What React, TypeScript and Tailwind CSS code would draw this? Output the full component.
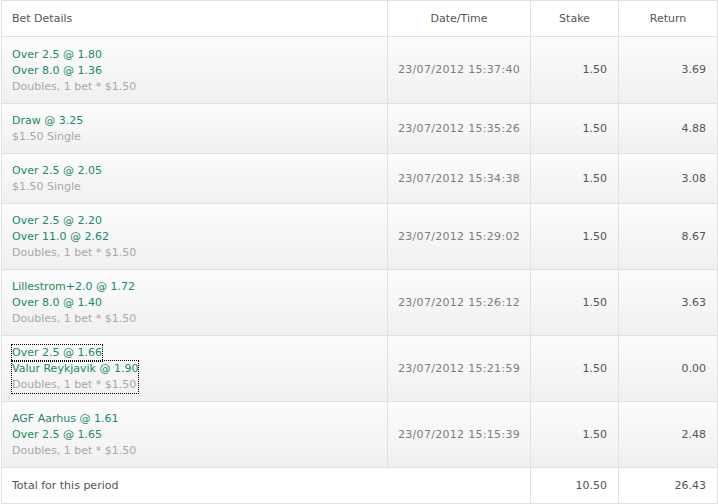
import React from "react";

type Bet = {
  legs: string[];
  note: string;
  date: string;
  stake: string;
  ret: string;
  focused?: boolean;
};

const bets: Bet[] = [
  { legs: ["Over 2.5 @ 1.80", "Over 8.0 @ 1.36"], note: "Doubles, 1 bet * $1.50", date: "23/07/2012 15:37:40", stake: "1.50", ret: "3.69" },
  { legs: ["Draw @ 3.25"], note: "$1.50 Single", date: "23/07/2012 15:35:26", stake: "1.50", ret: "4.88" },
  { legs: ["Over 2.5 @ 2.05"], note: "$1.50 Single", date: "23/07/2012 15:34:38", stake: "1.50", ret: "3.08" },
  { legs: ["Over 2.5 @ 2.20", "Over 11.0 @ 2.62"], note: "Doubles, 1 bet * $1.50", date: "23/07/2012 15:29:02", stake: "1.50", ret: "8.67" },
  { legs: ["Lillestrom+2.0 @ 1.72", "Over 8.0 @ 1.40"], note: "Doubles, 1 bet * $1.50", date: "23/07/2012 15:26:12", stake: "1.50", ret: "3.63" },
  { legs: ["Over 2.5 @ 1.66", "Valur Reykjavik @ 1.90"], note: "Doubles, 1 bet * $1.50", date: "23/07/2012 15:21:59", stake: "1.50", ret: "0.00", focused: true },
  { legs: ["AGF Aarhus @ 1.61", "Over 2.5 @ 1.65"], note: "Doubles, 1 bet * $1.50", date: "23/07/2012 15:15:39", stake: "1.50", ret: "2.48" },
];

const font = { fontFamily: '"DejaVu Sans", Verdana, sans-serif' };

function Details({ bet }: { bet: Bet }) {
  if (bet.focused) {
    return (
      <div>
        <span className="inline-block outline-1 outline-dotted outline-black">{bet.legs[0]}</span>
        <div className="w-fit outline-1 outline-dotted outline-black">
          <div className="text-[#1f8a5c]">{bet.legs[1]}</div>
          <div className="text-[#a8a8a8]">{bet.note}</div>
        </div>
      </div>
    );
  }
  return (
    <div>
      {bet.legs.map((l) => (
        <div key={l}>{l}</div>
      ))}
      <div className="text-[#a8a8a8]">{bet.note}</div>
    </div>
  );
}

export default function App() {
  return (
    <div className="bg-white w-[718px] h-[504px] overflow-hidden text-[11px] leading-[16px]" style={font}>
      <table className="ml-px w-[716px] table-fixed border-collapse border border-[#e1e1e1]">
        <colgroup>
          <col className="w-[386px]" />
          <col className="w-[143px]" />
          <col className="w-[88px]" />
          <col className="w-[99px]" />
        </colgroup>
        <thead>
          <tr className="h-[36px] text-[#555]">
            <th className="border border-[#e1e1e1] pl-[10px] text-left font-normal">Bet Details</th>
            <th className="border border-[#e1e1e1] text-center font-normal">Date/Time</th>
            <th className="border border-[#e1e1e1] text-center font-normal">Stake</th>
            <th className="border border-[#e1e1e1] text-center font-normal">Return</th>
          </tr>
        </thead>
        <tbody>
          {bets.map((b, i) => (
            <tr key={b.date} className="bg-gradient-to-b from-[#fcfcfc] to-[#f0f0f0]">
              <td
                className={
                  i === 0
                    ? "border border-[#e1e1e1] pl-[10px] pt-[10px] pb-[8px] align-top text-[#1f8a5c]"
                    : "border border-[#e1e1e1] pl-[10px] pt-[9px] pb-[8px] align-top text-[#1f8a5c]"
                }
              >
                <Details bet={b} />
              </td>
              <td className="border border-[#e1e1e1] text-center tracking-[0.3px] text-[#7d7d7d]">{b.date}</td>
              <td className="border border-[#e1e1e1] pr-[11px] text-right text-[#555]">{b.stake}</td>
              <td className="border border-[#e1e1e1] pr-[11px] text-right text-[#555]">{b.ret}</td>
            </tr>
          ))}
          <tr className="h-[36px] bg-white text-[#555]">
            <td colSpan={2} className="border border-[#e1e1e1] pl-[10px]">Total for this period</td>
            <td className="border border-[#e1e1e1] pr-[11px] text-right">10.50</td>
            <td className="border border-[#e1e1e1] pr-[11px] text-right">26.43</td>
          </tr>
        </tbody>
      </table>
    </div>
  );
}
